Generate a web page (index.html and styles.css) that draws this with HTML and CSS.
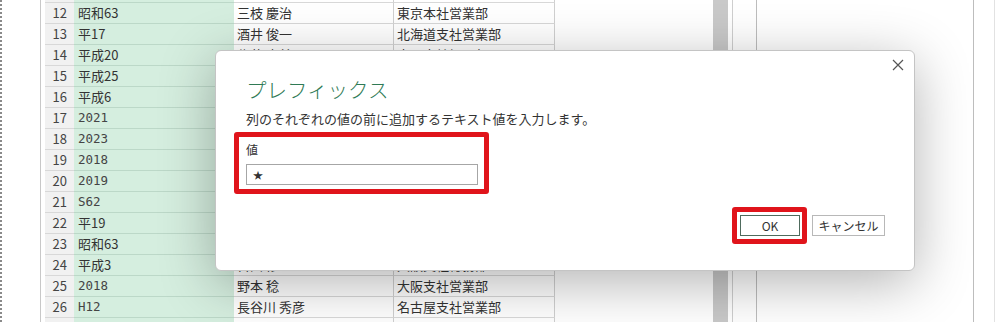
FILE: index.html
```html
<!DOCTYPE html>
<html lang="ja">
<head>
    <meta charset="UTF-8">
    <title>プレフィックス</title>
    <link rel="stylesheet" href="styles.css">
</head>
<body>
    <div class="app">
        <div class="edge"></div>
        <div class="sheet">
            <div class="rows" id="rows"></div>
        </div>
        <div class="blank"></div>
        <div class="scroll"></div>
        <div class="pane narrow"></div>
        <div class="pane wide"></div>
        <div class="pane tail"></div>
    </div>

    <div class="dialog">
        <span class="close">
            <svg width="12" height="12" viewBox="0 0 12 12"><path d="M1 1L11 11M11 1L1 11" stroke="#555" stroke-width="1.2" fill="none"/></svg>
        </span>
        <h1 class="title">プレフィックス</h1>
        <p class="desc">列のそれぞれの値の前に追加するテキスト値を入力します。</p>
        <div class="field mark">
            <label class="label">値</label>
            <div class="input">★</div>
        </div>
        <div class="footer">
            <div class="mark ok-mark"><button class="btn ok">OK</button></div>
            <button class="btn cancel">キャンセル</button>
        </div>
    </div>

    <script>
        const data = [
            [11, '平成11', false, '', ''],
            [12, '昭和63', false, '三枝 慶治', '東京本社営業部'],
            [13, '平17', false, '酒井 俊一', '北海道支社営業部'],
            [14, '平成20', false, '佐藤 恵美子', '大阪支社経理部'],
            [15, '平成25', false, '山田 太郎', '東京本社総務部'],
            [16, '平成6', false, '鈴木 一郎', '東京本社経理部'],
            [17, '2021', true, '高橋 花子', '福岡支社営業部'],
            [18, '2023', true, '田中 健', '東京本社営業部'],
            [19, '2018', true, '伊藤 美咲', '大阪支社営業部'],
            [20, '2019', true, '渡辺 誠', '名古屋支社営業部'],
            [21, 'S62', true, '中村 大輔', '北海道支社総務部'],
            [22, '平19', false, '小林 直樹', '東京本社営業部'],
            [23, '昭和63', false, '加藤 由美', '福岡支社経理部'],
            [24, '平成3', false, '吉田 修', '大阪支社総務部'],
            [25, '2018', true, '野本 稔', '大阪支社営業部'],
            [26, 'H12', true, '長谷川 秀彦', '名古屋支社営業部'],
            [27, '平成8', false, '横田 美樹', '東京本社営業部']
        ];

        const rows = document.getElementById('rows');
        data.forEach(d => {
            const row = document.createElement('div');
            row.className = 'row';
            row.innerHTML =
                '<span class="num">' + d[0] + '</span>' +
                '<span class="era' + (d[2] ? ' mono' : '') + '">' + d[1] + '</span>' +
                '<span class="cell">' + d[3] + '</span>' +
                '<span class="cell">' + d[4] + '</span>';
            rows.appendChild(row);
        });
    </script>
</body>
</html>
```

FILE: styles.css
```css
body {
    margin: 0;
    width: 1000px;
    height: 322px;
    overflow: hidden;
    background: #fff;
    font-family: "Noto Sans CJK JP", "Noto Sans", sans-serif;
    color: #333;
}
.app {
    display: flex;
    height: 322px;
}
.edge {
    width: 38px;
    border-left: 2px dotted #8a8a8a;
    border-right: 1px solid #c8c8c8;
    flex: none;
}
.sheet {
    width: 510px;
    padding-left: 4px;
    flex: none;
    overflow: hidden;
}
.rows {
    margin-top: -18px;
}
.row {
    display: grid;
    grid-template-columns: 29px 160px 160px 161px;
    height: 21px;
    font-size: 13px;
    line-height: 20px;
}
.row span {
    border-bottom: 1px solid #d8d8d8;
    white-space: nowrap;
    overflow: hidden;
}
.num {
    background: #f1f1f1;
    text-align: right;
    padding-right: 7px;
    color: #444;
}
.era {
    background: #d5eedf;
    border-bottom-color: #bcd8c8 !important;
    padding-left: 4px;
}
.era.mono {
    font-family: "DejaVu Sans Mono", "Liberation Mono", monospace;
    font-size: 12.5px;
    color: #444;
}
.cell {
    border-right: 1px solid #d0d0d0;
    padding-left: 3px;
}
.blank {
    width: 158px;
    flex: none;
}
.scroll {
    width: 15px;
    background: #c9c9c9;
    flex: none;
}
.pane {
    flex: none;
    border-right: 1px solid #bdbdbd;
}
.narrow {
    width: 23px;
    border-left: 1px solid #cfcfcf;
    margin-left: 4px;
}
.wide {
    width: 216px;
}
.tail {
    width: 20px;
    border-right-color: #e2e2e2;
}

/* dialog */
.dialog {
    position: absolute;
    left: 215px;
    top: 50px;
    width: 700px;
    height: 221px;
    background: #fff;
    border: 1px solid #c4c4c4;
    border-radius: 6px;
    box-shadow: 0 12px 55px rgba(0, 0, 0, 0.3);
    padding: 0 29px 0 30px;
    box-sizing: border-box;
}
.close {
    position: absolute;
    right: 10px;
    top: 8px;
    width: 12px;
    height: 12px;
    display: flex;
}
.title {
    margin: 23px 0 0;
    font-size: 20.5px;
    font-weight: 300;
    line-height: 30px;
    color: #2f7a55;
}
.desc {
    margin: 6px 0 0;
    font-size: 13px;
    line-height: 18px;
    color: #333;
}
.mark {
    border: 5px solid #e0141b;
    border-radius: 3px;
}
.field {
    margin: 4px 0 0 -12px;
    width: 238px;
    height: 47px;
    padding: 5px 0 0 7px;
}
.label {
    display: block;
    font-size: 12px;
    line-height: 16px;
    color: #333;
}
.input {
    margin-top: 6px;
    width: 224px;
    height: 19px;
    border: 1px solid #a6a6a6;
    font-size: 10px;
    line-height: 19px;
    padding-left: 6px;
}
.footer {
    display: flex;
    justify-content: flex-end;
    align-items: center;
    gap: 5px;
    margin-top: 13px;
}
.ok-mark {
    padding: 3px 2px 3px 3px;
    display: flex;
}
.btn {
    font-family: inherit;
    font-size: 12px;
    height: 21px;
    padding: 0;
    background: #fff;
    border: 1px solid #b8b8b8;
    color: #333;
    margin: 0;
}
.btn.ok {
    width: 60px;
    border-color: #4f6b5d;
}
.btn.cancel {
    width: 73px;
}
```
